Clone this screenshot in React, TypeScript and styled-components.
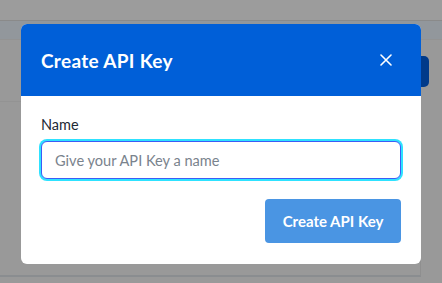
import styled, { createGlobalStyle } from 'styled-components'

const GlobalStyle = createGlobalStyle`
	html, body {
		margin: 0;
		padding: 0;
		background: #999999;
		font-family: Lato, "Open Sans", sans-serif;
	}
	* {
		box-sizing: border-box;
	}
`

// the page behind the dialog, drawn in its dimmed colours
const App = () => {
	return (
		<>
			<GlobalStyle />
			<Page>
				<TopBar />
				<SubBar />
				<Content>
					<Card>
						<CardHead>
							<GhostButton />
						</CardHead>
					</Card>
				</Content>
			</Page>
			<Overlay>
				<Modal>
					<ModalHeader>
						<ModalTitle>Create API Key</ModalTitle>
						<CloseButton aria-label="Close">
							<svg width="12" height="12" viewBox="0 0 12 12" fill="none">
								<path d="M1 1L11 11M11 1L1 11" stroke="#ffffff" strokeWidth="1.6" strokeLinecap="round" />
							</svg>
						</CloseButton>
					</ModalHeader>
					<ModalBody>
						<Label htmlFor="api-key-name">Name</Label>
						<NameInput id="api-key-name" placeholder="Give your API Key a name" />
						<Footer>
							<SubmitButton>Create API Key</SubmitButton>
						</Footer>
					</ModalBody>
				</Modal>
			</Overlay>
		</>
	)
}

export default App

const Page = styled.div`
	width: 442px;
	height: 283px;
	display: flex;
	flex-direction: column;
	background: #999999;
	overflow: hidden;
`
const TopBar = styled.div`
	height: 21px;
	background: #9c9c9c;
	border-bottom: 1px solid #8a8a8a;
`
const SubBar = styled.div`
	height: 19px;
	background: #92979c;
	border-bottom: 1px solid #939393;
`
const Content = styled.div`
	flex: 1;
	display: flex;
	padding: 0 21px 0 0;
	background: #999999;
`
const Card = styled.div`
	flex: 1;
	height: 237px;
	border-right: 1px solid #8f8f8f;
	border-bottom: 2px solid #8a8d90;
`
const CardHead = styled.div`
	display: flex;
	justify-content: flex-end;
	padding: 16px 0 0 0;
	border-bottom: 1px solid #939393;
	height: 62px;
`
const GhostButton = styled.div`
	width: 30px;
	height: 31px;
	margin-right: -9px;
	background: #003a8a;
	border-radius: 5px;
`
const Overlay = styled.div`
	position: fixed;
	top: 0;
	left: 0;
	width: 442px;
	height: 283px;
	z-index: 10;
	display: flex;
	justify-content: center;
	align-items: flex-start;
	padding-top: 24px;
`
const Modal = styled.div`
	width: 400px;
	background: #ffffff;
	border-radius: 6px;
	overflow: hidden;
`
const ModalHeader = styled.div`
	height: 72px;
	background: #005fd8;
	display: flex;
	align-items: center;
	justify-content: space-between;
	padding: 0 29px 0 20px;
`
const ModalTitle = styled.h2`
	margin: 0;
	color: #ffffff;
	font-size: 19px;
	font-weight: 700;
	letter-spacing: 0.3px;
`
const CloseButton = styled.button`
	background: none;
	border: none;
	padding: 0;
	width: 12px;
	height: 12px;
	display: flex;
	cursor: pointer;
`
const ModalBody = styled.div`
	padding: 20px 20px 21px 20px;
	display: flex;
	flex-direction: column;
`
const Label = styled.label`
	color: #1e2a35;
	font-size: 14.5px;
	font-weight: 400;
	line-height: 17px;
	margin-bottom: 8px;
`
const NameInput = styled.input`
	height: 38px;
	border: 1px solid #3d5cf5;
	border-radius: 6px;
	box-shadow: 0 0 0 2px #2ee2ff;
	padding: 0 13px;
	font-family: Lato, "Open Sans", sans-serif;
	font-size: 14.6px;
	color: #1e2a35;
	outline: none;
	&::placeholder {
		color: #7a838d;
	}
`
const Footer = styled.div`
	display: flex;
	justify-content: flex-end;
	margin-top: 20px;
`
const SubmitButton = styled.button`
	width: 136px;
	height: 44px;
	background: #4a95e3;
	border: none;
	border-radius: 4px;
	color: #ffffff;
	font-family: Lato, "Open Sans", sans-serif;
	font-size: 15px;
	font-weight: 700;
	cursor: pointer;
`
